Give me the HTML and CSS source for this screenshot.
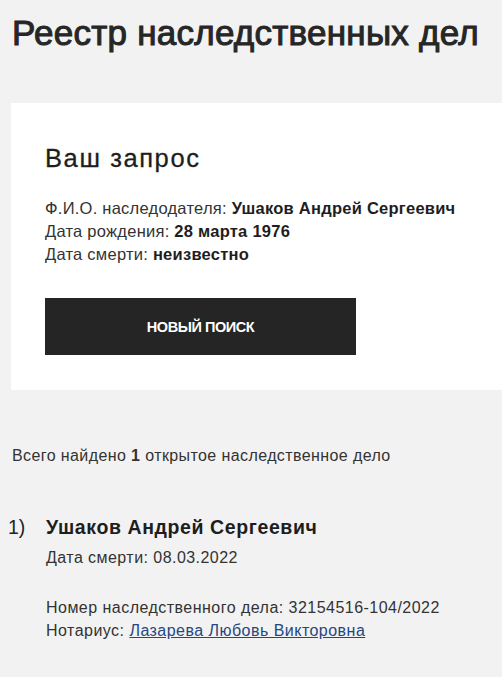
FILE: index.html
```html
<!DOCTYPE html>
<html lang="ru">
<head>
<meta charset="utf-8">
<link rel="stylesheet" href="styles.css">
</head>
<body>
<h1 class="title">Реестр наследственных дел</h1>
<section class="card">
  <h2 class="card-title">Ваш запрос</h2>
  <div class="query">
    <div>Ф.И.О. наследодателя: <b>Ушаков Андрей Сергеевич</b></div>
    <div>Дата рождения: <b>28 марта 1976</b></div>
    <div>Дата смерти: <b>неизвестно</b></div>
  </div>
  <button class="btn">НОВЫЙ ПОИСК</button>
</section>
<p class="total">Всего найдено <b>1</b> открытое наследственное дело</p>
<ol class="results">
  <li class="result">
    <span class="num">1)</span>
    <div class="body">
      <div class="name">Ушаков Андрей Сергеевич</div>
      <div class="death">Дата смерти: 08.03.2022</div>
      <div class="meta">
        <div>Номер наследственного дела: 32154516-104/2022</div>
        <div>Нотариус: <a href="#" class="link">Лазарева Любовь Викторовна</a></div>
      </div>
    </div>
  </li>
</ol>
</body>
</html>
```
FILE: styles.css
```css
html, body {
  margin: 0;
  padding: 0;
}
body {
  background: #f2f2f2;
  color: #222;
  font-family: "Liberation Sans", Arial, sans-serif;
  width: 502px;
  height: 677px;
  overflow: hidden;
}
.title {
  margin: 0;
  padding: 13px 0 0 12px;
  font-size: 35px;
  font-weight: normal;
  line-height: 40px;
  letter-spacing: 0.25px;
  color: #262626;
  -webkit-text-stroke: 1px #262626;
  white-space: nowrap;
}
.card {
  background: #fff;
  margin: 50px 0 0 11px;
  padding: 41px 34px 35px 34px;
}
.card-title {
  margin: 0;
  font-size: 25.5px;
  font-weight: normal;
  line-height: 28px;
  letter-spacing: 1.6px;
  color: #1e1e1e;
  -webkit-text-stroke: 0.3px #1e1e1e;
}
.query {
  margin-top: 25px;
  font-size: 16.5px;
  line-height: 23px;
  letter-spacing: 0.25px;
  color: #333;
}
.query b {
  color: #1e1e1e;
}
.btn {
  display: block;
  margin-top: 32px;
  width: 311px;
  height: 57px;
  background: #252525;
  color: #fff;
  border: 0;
  font-family: "Liberation Sans", Arial, sans-serif;
  font-weight: bold;
  font-size: 14.5px;
  letter-spacing: -0.45px;
  padding: 0;
}
.total {
  margin: 55.5px 0 0 12px;
  font-size: 16px;
  line-height: 20px;
  letter-spacing: 0.4px;
  color: #333;
}
.results {
  list-style: none;
  margin: 48px 0 0 0;
  padding: 0;
}
.result {
  display: flex;
}
.num {
  width: 46px;
  padding-left: 8px;
  box-sizing: border-box;
  font-size: 19.5px;
  line-height: 26px;
  color: #222;
}
.name {
  font-size: 19.5px;
  font-weight: bold;
  line-height: 26px;
  letter-spacing: 0.6px;
  color: #1e1e1e;
}
.death {
  margin-top: 7px;
  font-size: 16px;
  line-height: 22px;
  letter-spacing: 0.45px;
  color: #333;
}
.meta {
  margin-top: 27.5px;
  font-size: 16px;
  line-height: 23px;
  letter-spacing: 0.47px;
  color: #333;
}
.link {
  color: #27467f;
  text-decoration: underline;
}
```
